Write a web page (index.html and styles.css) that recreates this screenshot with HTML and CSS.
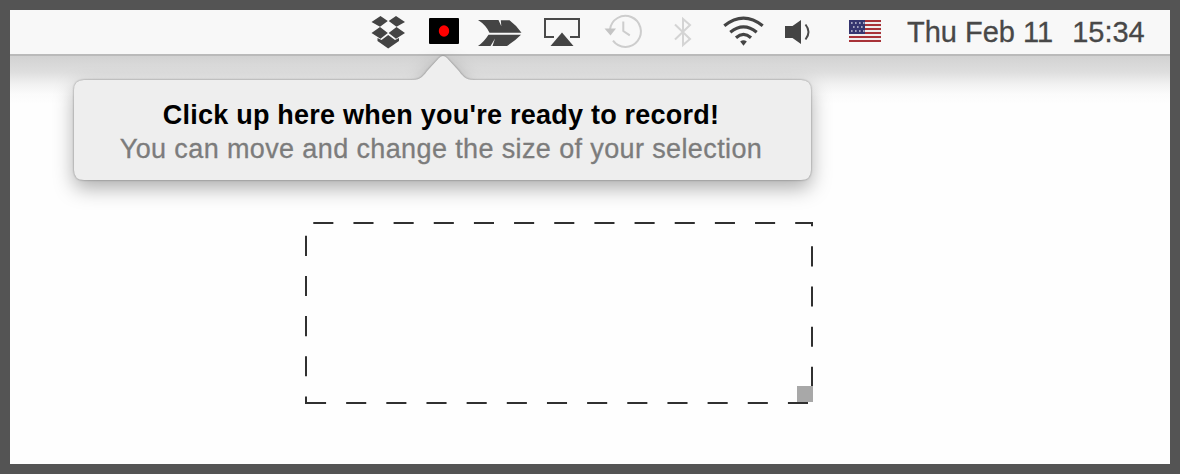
FILE: index.html
```html
<!DOCTYPE html>
<html lang="en">
<head>
<meta charset="utf-8">
<title>Ready to record</title>
<link rel="stylesheet" href="styles.css">
</head>
<body>
<div class="screen">
  <header class="menubar">
    <svg class="icon dropbox" width="34" height="34" viewBox="0 0 34 34"><path d="M9.500 1l7.300 5L9 11.800.5 7zM25 1l-7.300 5 7.800 5.800L34 7zM.5 18L9 12l7.800 6L9.500 23.800zM34 18l-8.500-6-7.800 6 7.300 5.800zM17.200 20l6.800 5 4-2v3L17.200 33.500 6.500 26v-3l4 2z"/></svg>
    <svg class="icon record" width="30" height="26" viewBox="0 0 30 26"><rect width="30" height="26" rx="1"/><ellipse class="dot" cx="15" cy="13" rx="5.200" ry="5.800"/></svg>
    <svg class="icon arrow" width="44" height="28" viewBox="0 0 44 28"><path d="M0 1H20.500L23.300 7.300 22.800 1.300H31.500Q38 6 43.500 13.800H11.500Q8 6 0 1zM10.500 15.800H43Q37 22 29 27H14.500L17 19.500 12.500 27H0Q6 23 10.500 15.800z"/></svg>
    <svg class="icon airplay" width="36" height="28" viewBox="0 0 36 28"><path class="line" d="M10 19H1V1h34v18h-9"/><path d="M18 14.500l11.500 13.500h-23z"/></svg>
    <svg class="icon faint clock" width="38" height="34" viewBox="0 0 38 34"><path class="line" d="M5 15.500A15.500 15.500 0 1 1 8 26.700M18.300 7.500V17l6.500 4.300"/><path class="solid" d="M-.5 14.500h11.500l-5.500 7z"/></svg>
    <svg class="icon faint bluetooth" width="18" height="30" viewBox="0 0 18 30"><path class="line" d="M1 7.500l15 14.500-7 6V2l7 6-15 14.500"/></svg>
    <svg class="icon wifi" width="42" height="30" viewBox="0 0 42 30"><path class="line" d="M1.300 9.800Q20.500-5.500 39.700 9.800M7.300 16.300q13.200-11 26.400 0M13 21.700q7.500-6.500 15 0"/><path d="M17.200 25.500q3.300-2.700 6.600 0L20.500 29.800z"/></svg>
    <svg class="icon volume" width="27" height="26" viewBox="0 0 27 26"><path d="M0 6h7.500L16 0v24L7.500 18H0z"/><path class="line" d="M20.500 4.500q6 7.500 0 15"/></svg>
    <svg class="icon flag" width="32" height="22" viewBox="0 0 32 22"><path class="white" d="M0 0h32v22H0z"/><path class="stripes" d="M0 1h32M0 4.900h32M0 8.900h32M0 12.900h32M0 16.900h32M0 20.900h32"/><path class="canton" d="M0 0h16v14H0z"/><path class="stars" d="M2 3h14M4 7h12M2 11h14"/></svg>
    <div class="time"><span class="date">Thu Feb 11</span><span class="hour">15:34</span></div>
  </header>
  <main class="desktop">
    <section class="popover">
      <svg class="bubble" width="739" height="127" viewBox="0 0 739 127"><path d="M11 25H339C348 25 351 20 355 15L366 3Q370-1 374 3L385 15C389 20 392 25 401 25H728Q738 25 738 35V115Q738 125 728 125H11Q1 125 1 115V35Q1 25 11 25Z"/></svg>
      <p class="title">Click up here when you're ready to record!</p>
      <p class="subtitle">You can move and change the size of your selection</p>
    </section>
    <svg class="selection" width="510" height="184" viewBox="304 221 510 184"><path d="M306 403H812V223H306Z"/><rect x="797" y="386" width="16" height="16"/></svg>
  </main>
</div>
</body>
</html>
```
FILE: styles.css
```css
* { box-sizing: border-box; }
body { margin: 0; background: #545454; font-family: "Liberation Sans", Arial, sans-serif; }
.screen { width: 1180px; height: 474px; border: 10px solid #545454; background: #fefefe; overflow: hidden; display: flex; flex-direction: column; }
.menubar { height: 46px; flex: none; display: flex; align-items: flex-start; padding-left: 361px; background: #f8f8f8; border-bottom: 2px solid #bababa; }
.icon { display: block; flex: none; fill: #444; overflow: visible; }
.line { fill: none; stroke: #4a4a4a; stroke-width: 2; }
.dropbox { margin-top: 5px; }
.record { margin: 8px 0 0 24px; fill: #000; }
.dot { fill: #f00; }
.arrow { margin: 9px 0 0 19px; }
.airplay { margin: 8px 0 0 22px; }
.clock { margin: 4px 0 0 25px; }
.faint .line { stroke: #cdcdcd; }
.bluetooth .line { stroke: #d4d4d4; }
.faint .solid { fill: #c4c4c4; }
.bluetooth { margin: 7px 0 0 31px; }
.wifi { margin: 6px 0 0 31px; }
.wifi .line { stroke: #444; stroke-width: 3.2; }
.volume { margin: 10px 0 0 20px; }
.flag { margin: 10px 0 0 37px; }
.white { fill: #eee; }
.stripes { stroke: #a83238; stroke-width: 2; }
.canton { fill: #35356f; }
.stars { fill: none; stroke: #c9c9dc; stroke-width: 1.6; stroke-dasharray: 1.6 2.4; }
.time { display: flex; gap: 19px; margin-left: 26px; margin-top: 4px; font-size: 29px; line-height: 36px; color: #484848; white-space: nowrap; -webkit-text-stroke: .3px #484848; }
.desktop { flex: 1; background: linear-gradient(#d2d2d2 0, #dedede 16px, #f1f1f1 28px, #fbfbfb 38px, #fefefe 48px); }
.popover { position: relative; width: 739px; height: 125px; margin-left: 63px; padding: 42px 3px 0 0; text-align: center; }
.bubble { position: absolute; left: 0; top: -1px; overflow: visible; fill: #eee; filter: drop-shadow(0 0 1px rgba(0,0,0,.38)) drop-shadow(0 8px 10px rgba(0,0,0,.32)); }
.title, .subtitle { position: relative; margin: 0; line-height: 34px; font-size: 27px; white-space: nowrap; }
.title { font-weight: bold; color: #000; letter-spacing: .24px; }
.subtitle { color: #7c7c7c; letter-spacing: .38px; -webkit-text-stroke: .3px #7c7c7c; }
.selection { display: block; margin: 40px 0 0 294px; }
.selection path { fill: none; stroke: #303030; stroke-width: 2; stroke-dasharray: 20.08; }
.selection rect { fill: #a8a8a8; }
```
